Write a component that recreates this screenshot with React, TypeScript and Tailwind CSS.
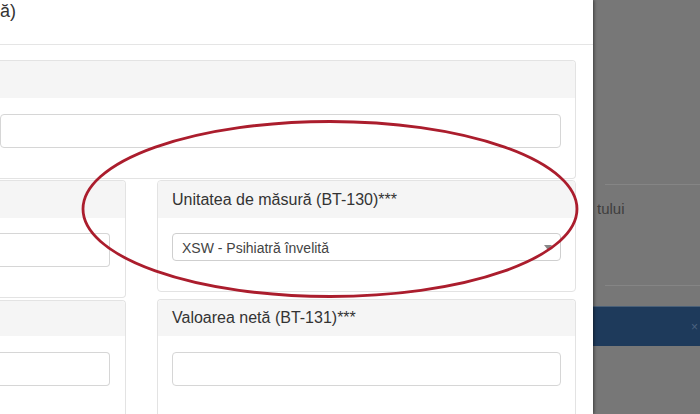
export default function App() {
  return (
    <div className="relative w-[700px] h-[414px] overflow-hidden flex bg-[#777777] font-['Liberation_Sans',Arial,sans-serif] text-[#333]">
      <div className="relative z-10 w-[593px] h-full shrink-0 bg-white flex flex-col shadow-[1px_0_3px_rgba(0,0,0,0.5)]">
        <div className="relative h-[45px] shrink-0 border-b border-[#e5e5e5]">
          <div className="text-[18px] leading-[23px]">ă)</div>
          <span className="absolute right-[18px] top-[-16px] text-[21px] font-bold leading-[21px] text-black/20">×</span>
        </div>
        <div className="pt-[15px] pr-[17px] flex flex-col">
          <div className="border border-l-0 border-[#e3e3e3] rounded-r-[4px]">
            <div className="h-[37px] bg-[#f5f5f5] rounded-tr-[4px]" />
            <div className="pt-[16px] pr-[14px] pb-[30px]">
              <div className="h-[34px] border border-[#d6d6d6] rounded-[4px] bg-white" />
            </div>
          </div>
          <div className="flex gap-[31px] mt-[1px]">
            <div className="w-[126px] shrink-0 flex flex-col">
              <div className="border border-l-0 border-[#e3e3e3] rounded-r-[4px]">
                <div className="h-[37px] bg-[#f5f5f5] rounded-tr-[4px]" />
                <div className="pt-[15px] pr-[15px] pb-[30px]">
                  <div className="h-[34px] border border-[#d6d6d6] rounded-r-[4px] border-l-0" />
                </div>
              </div>
              <div className="mt-[2px] border border-l-0 border-b-0 border-[#e3e3e3] rounded-tr-[4px]">
                <div className="h-[35px] bg-[#f5f5f5] rounded-tr-[4px]" />
                <div className="pt-[16px] pr-[15px] pb-[30px]">
                  <div className="h-[34px] border border-[#d6d6d6] rounded-r-[4px] border-l-0" />
                </div>
              </div>
            </div>
            <div className="flex-1 flex flex-col">
              <div className="border border-[#e3e3e3] rounded-[4px]">
                <div className="h-[37px] bg-[#f5f5f5] rounded-t-[4px] px-[14px] flex items-center text-[16px] leading-[20px]">
                  Unitatea de măsură (BT-130)***
                </div>
                <div className="pt-[15px] px-[14px] pb-[30px]">
                  <div className="relative h-[28px] border border-[#cfcfcf] rounded-[4px] bg-white flex items-center pl-[9px] pt-[1px] text-[14px] leading-[20px] text-[#444]">
                    XSW - Psihiatră învelită
                    <span className="absolute right-[8px] top-[11px] w-0 h-0 border-l-[4px] border-r-[4px] border-t-[5px] border-l-transparent border-r-transparent border-t-[#888]" />
                  </div>
                </div>
              </div>
              <div className="mt-[7px] border border-b-0 border-[#e3e3e3] rounded-t-[4px]">
                <div className="h-[36px] bg-[#f5f5f5] rounded-t-[4px] px-[14px] flex items-center text-[16px] leading-[20px]">
                  Valoarea netă (BT-131)***
                </div>
                <div className="pt-[16px] px-[14px] pb-[30px]">
                  <div className="h-[34px] border border-[#d6d6d6] rounded-[4px] bg-white" />
                </div>
              </div>
            </div>
          </div>
        </div>
      </div>
      <div className="flex-1 flex flex-col">
        <div className="h-[185px] shrink-0 border-b border-[#858585] ml-[12px]" />
        <div className="pt-[16px] pl-[4px] text-[15px] leading-[16px] text-[#3e3e3e]">tului</div>
        <div className="h-[69px] shrink-0 border-b border-[#858585] ml-[12px]" />
        <div className="mt-[20px] h-[40px] shrink-0 bg-[#1e3a5b] border-t border-[#4a6078] flex items-center justify-end pr-[2px] text-[12px] text-[#4c6380]">
          ×
        </div>
      </div>
      <svg className="absolute left-0 top-0 z-20 pointer-events-none" width="700" height="414" viewBox="0 0 700 414">
        <ellipse cx="330" cy="209" rx="247" ry="87.5" fill="none" stroke="#ab1d2d" strokeWidth="2.8" />
      </svg>
    </div>
  );
}
